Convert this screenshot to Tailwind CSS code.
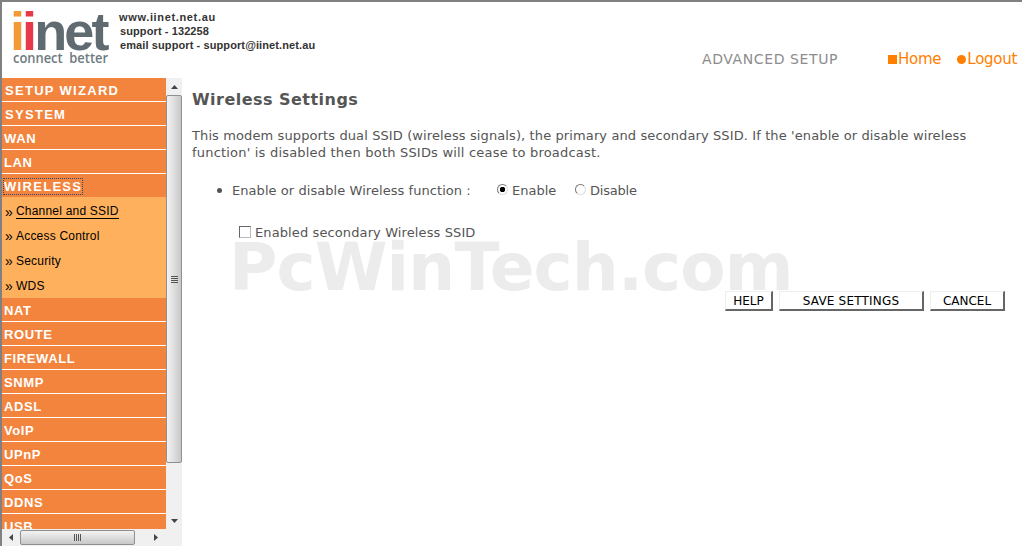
<!DOCTYPE html>
<html lang="en">
<head>
    <meta charset="UTF-8">
    <title>Wireless Settings</title>
    <script src="https://cdn.jsdelivr.net/npm/@tailwindcss/browser@4"></script>
</head>
<body class="h-[546px] w-[1022px] overflow-hidden bg-white font-['DejaVu_Sans',sans-serif]">
    <div class="flex h-full flex-col border-t-2 border-l-2 border-[#808080]">
        <!-- Header -->
        <header class="relative h-[76px] shrink-0">
            <div class="absolute left-[8px] top-[10px] w-[104px]">
                <div class="h-[38px] text-[54px] leading-[38px] font-bold tracking-[-2.9px] text-[#5f6b70] font-['Liberation_Sans',sans-serif]"><span class="text-[#f39a35]">i</span><span class="text-[#e8394a]">i</span>net</div>
                <div class="ml-[3px] origin-left scale-x-[0.86] text-[15px] leading-[14px] font-semibold whitespace-nowrap text-[#6d7a80] font-['Open_Sans',sans-serif]">connect&nbsp; better</div>
            </div>
            <div class="absolute left-[117px] top-[8px] text-[11px] leading-[14px] font-bold text-[#333] font-['Liberation_Sans',sans-serif]">
                <p class="tracking-[0.65px]">www.iinet.net.au</p>
                <p class="pl-[1px] tracking-[0.1px]">support - 132258</p>
                <p class="pl-[1px] tracking-[0.1px]">email support - support@iinet.net.au</p>
            </div>
            <div class="absolute left-[700px] top-[49px] text-[14px] leading-[17px] tracking-[0.6px] text-[#8c8c8c]">ADVANCED SETUP</div>
            <div class="absolute left-[886px] top-[48px] flex items-center text-[15px] leading-[18px] tracking-[-0.25px] text-[#ff8000]">
                <span class="mr-[1px] size-[9px] bg-[#ff8000]"></span><span>Home</span>
                <span class="ml-[16px] mr-[1px] size-[9px] rounded-full bg-[#ff8000]"></span><span>Logout</span>
            </div>
        </header>

        <div class="flex min-h-0 flex-1">
            <!-- Left frame -->
            <div class="flex w-[180px] shrink-0 flex-col">
                <div class="flex min-h-0 flex-1">
                    <nav class="w-[164px] overflow-hidden font-['Liberation_Sans',sans-serif] text-[13px] font-bold text-white">
                        <div class="mb-px flex h-[23px] items-center bg-[#f2843e] pl-[3px] pt-[2px] tracking-[1.3px]">SETUP WIZARD</div>
                        <div class="mb-px flex h-[23px] items-center bg-[#f2843e] pl-[3px] pt-[2px] tracking-[1.3px]">SYSTEM</div>
                        <div class="mb-px flex h-[23px] items-center bg-[#f2843e] pl-[2px] pt-[2px] tracking-[0.6px]">WAN</div>
                        <div class="mb-px flex h-[23px] items-center bg-[#f2843e] pl-[2px] pt-[2px] tracking-[0.6px]">LAN</div>
                        <div class="flex h-[23px] items-center bg-[#f2843e] pl-[2px] pt-[2px]"><span class="outline-1 outline-dotted outline-[#1f4f7a] tracking-[1.3px] leading-[15px]">WIRELESS</span></div>
                        <div class="mb-px bg-[#ffb05c] pt-px text-[12px] font-normal tracking-[0.2px] text-black">
                            <div class="flex h-[25px] items-center pl-[3px] pt-[2px]"><span class="w-[11px] text-[14px] leading-[14px]">»</span><span class="border-b border-black leading-[14px]">Channel and SSID</span></div>
                            <div class="flex h-[25px] items-center pl-[3px]"><span class="w-[11px] text-[14px] leading-[14px]">»</span>Access Control</div>
                            <div class="flex h-[25px] items-center pl-[3px]"><span class="w-[11px] text-[14px] leading-[14px]">»</span>Security</div>
                            <div class="-mb-px flex h-[25px] items-center pl-[3px]"><span class="w-[11px] text-[14px] leading-[14px]">»</span>WDS</div>
                        </div>
                        <div class="mb-px flex h-[23px] items-center bg-[#f2843e] pl-[2px] pt-[2px] tracking-[0.6px]">NAT</div>
                        <div class="mb-px flex h-[23px] items-center bg-[#f2843e] pl-[2px] pt-[2px] tracking-[0.6px]">ROUTE</div>
                        <div class="mb-px flex h-[23px] items-center bg-[#f2843e] pl-[2px] pt-[2px] tracking-[0.6px]">FIREWALL</div>
                        <div class="mb-px flex h-[23px] items-center bg-[#f2843e] pl-[2px] pt-[2px] tracking-[0.6px]">SNMP</div>
                        <div class="mb-px flex h-[23px] items-center bg-[#f2843e] pl-[2px] pt-[2px] tracking-[0.6px]">ADSL</div>
                        <div class="mb-px flex h-[23px] items-center bg-[#f2843e] pl-[2px] pt-[2px] tracking-[0.6px]">VoIP</div>
                        <div class="mb-px flex h-[23px] items-center bg-[#f2843e] pl-[2px] pt-[2px] tracking-[0.6px]">UPnP</div>
                        <div class="mb-px flex h-[23px] items-center bg-[#f2843e] pl-[2px] pt-[2px] tracking-[0.6px]">QoS</div>
                        <div class="mb-px flex h-[23px] items-center bg-[#f2843e] pl-[2px] pt-[2px] tracking-[0.6px]">DDNS</div>
                        <div class="mb-px flex h-[23px] items-center bg-[#f2843e] pl-[2px] pt-[2px] tracking-[0.6px]">USB</div>
                    </nav>
                    <!-- Vertical scrollbar -->
                    <div class="flex w-[16px] flex-col bg-[#f0f0f0]">
                        <div class="flex h-[17px] shrink-0 items-center justify-center">
                            <svg width="7" height="4" viewBox="0 0 7 4"><path d="M3.5 0 7 4H0z" fill="#444"/></svg>
                        </div>
                        <div class="flex h-[368px] shrink-0 items-center justify-center rounded-[2px] border border-[#8e8f8f] bg-gradient-to-r from-[#f3f3f3] to-[#c8c8c8]">
                            <div class="h-[7px] w-[7px] bg-[repeating-linear-gradient(#555_0_1px,transparent_1px_2px)]"></div>
                        </div>
                        <div class="flex flex-1 items-end justify-center pb-[6px]">
                            <svg width="7" height="4" viewBox="0 0 7 4"><path d="M0 0H7L3.500 4z" fill="#444"/></svg>
                        </div>
                    </div>
                </div>
                <!-- Horizontal scrollbar -->
                <div class="flex h-[17px] shrink-0 items-center bg-[#f0f0f0]">
                    <div class="flex w-[18px] shrink-0 justify-center">
                        <svg width="4" height="7" viewBox="0 0 4 7"><path d="M4 0V7L0 3.500z" fill="#444"/></svg>
                    </div>
                    <div class="flex h-[15px] w-[115px] shrink-0 items-center justify-center rounded-[2px] border border-[#8e8f8f] bg-gradient-to-b from-[#f3f3f3] to-[#c8c8c8]">
                        <div class="h-[7px] w-[7px] bg-[repeating-linear-gradient(90deg,#555_0_1px,transparent_1px_2px)]"></div>
                    </div>
                    <div class="flex flex-1 justify-center pr-[6px]">
                        <svg width="4" height="7" viewBox="0 0 4 7"><path d="M0 0V7L4 3.500z" fill="#444"/></svg>
                    </div>
                </div>
            </div>

            <!-- Main frame -->
            <main class="relative flex-1 pl-[10px] pr-[17px] text-[13px] tracking-[0.11px] text-[#555]">
                <div class="pointer-events-none absolute left-[47px] top-[167px] text-[66px] leading-[46px] font-bold tracking-[-0.9px] text-[#ececec]">PcWinTech.com</div>
                <div class="relative">
                    <h1 class="pt-[12px] text-[16px] leading-[20px] font-bold tracking-[0.47px]">Wireless Settings</h1>
                    <p class="mt-[17px] leading-[17px]">This modem supports dual SSID (wireless signals), the primary and secondary SSID. If the 'enable or disable wireless <span class="tracking-[0.2px]">function' is disabled then both SSIDs will cease to broadcast.</span></p>
                    <div class="mt-[21px] flex h-[17px] items-center pl-[25px]">
                        <span class="mr-[10px] size-[5px] rounded-full bg-[#555]"></span>
                        <span class="w-[265px] tracking-[0.06px]">Enable or disable Wireless function :</span>
                        <input type="radio" name="wl" checked class="mr-[4px] mb-[3px] size-[11px] appearance-none rounded-full border border-t-[#777] border-l-[#777] border-r-[#ddd] border-b-[#ddd] bg-[radial-gradient(circle,#000_0_2.5px,transparent_3px)]">
                        <span class="w-[63px] tracking-normal">Enable</span>
                        <input type="radio" name="wl" class="mr-[4px] mb-[3px] size-[11px] appearance-none rounded-full border border-t-[#777] border-l-[#777] border-r-[#ddd] border-b-[#ddd]">
                        <span class="tracking-[-0.2px]">Disable</span>
                    </div>
                    <div class="mt-[25px] flex h-[17px] items-center pl-[47px]">
                        <input type="checkbox" class="mr-[4px] mb-[2px] size-[12px] appearance-none border border-t-[#666] border-l-[#666] border-r-[#bbb] border-b-[#bbb]">
                        <span>Enabled secondary Wireless SSID</span>
                    </div>
                    <div class="mt-[50px] flex justify-end gap-[6px] text-[12px] leading-[14px] tracking-normal text-black">
                        <button class="h-[20px] w-[48px] border border-[#eee] border-r-2 border-b-2 border-r-[#666] border-b-[#666]">HELP</button>
                        <button class="h-[20px] w-[145px] border border-[#eee] border-r-2 border-b-2 border-r-[#666] border-b-[#666] tracking-[0.2px]">SAVE SETTINGS</button>
                        <button class="h-[20px] w-[75px] border border-[#eee] border-r-2 border-b-2 border-r-[#666] border-b-[#666]">CANCEL</button>
                    </div>
                </div>
            </main>
        </div>
    </div>
</body>
</html>
